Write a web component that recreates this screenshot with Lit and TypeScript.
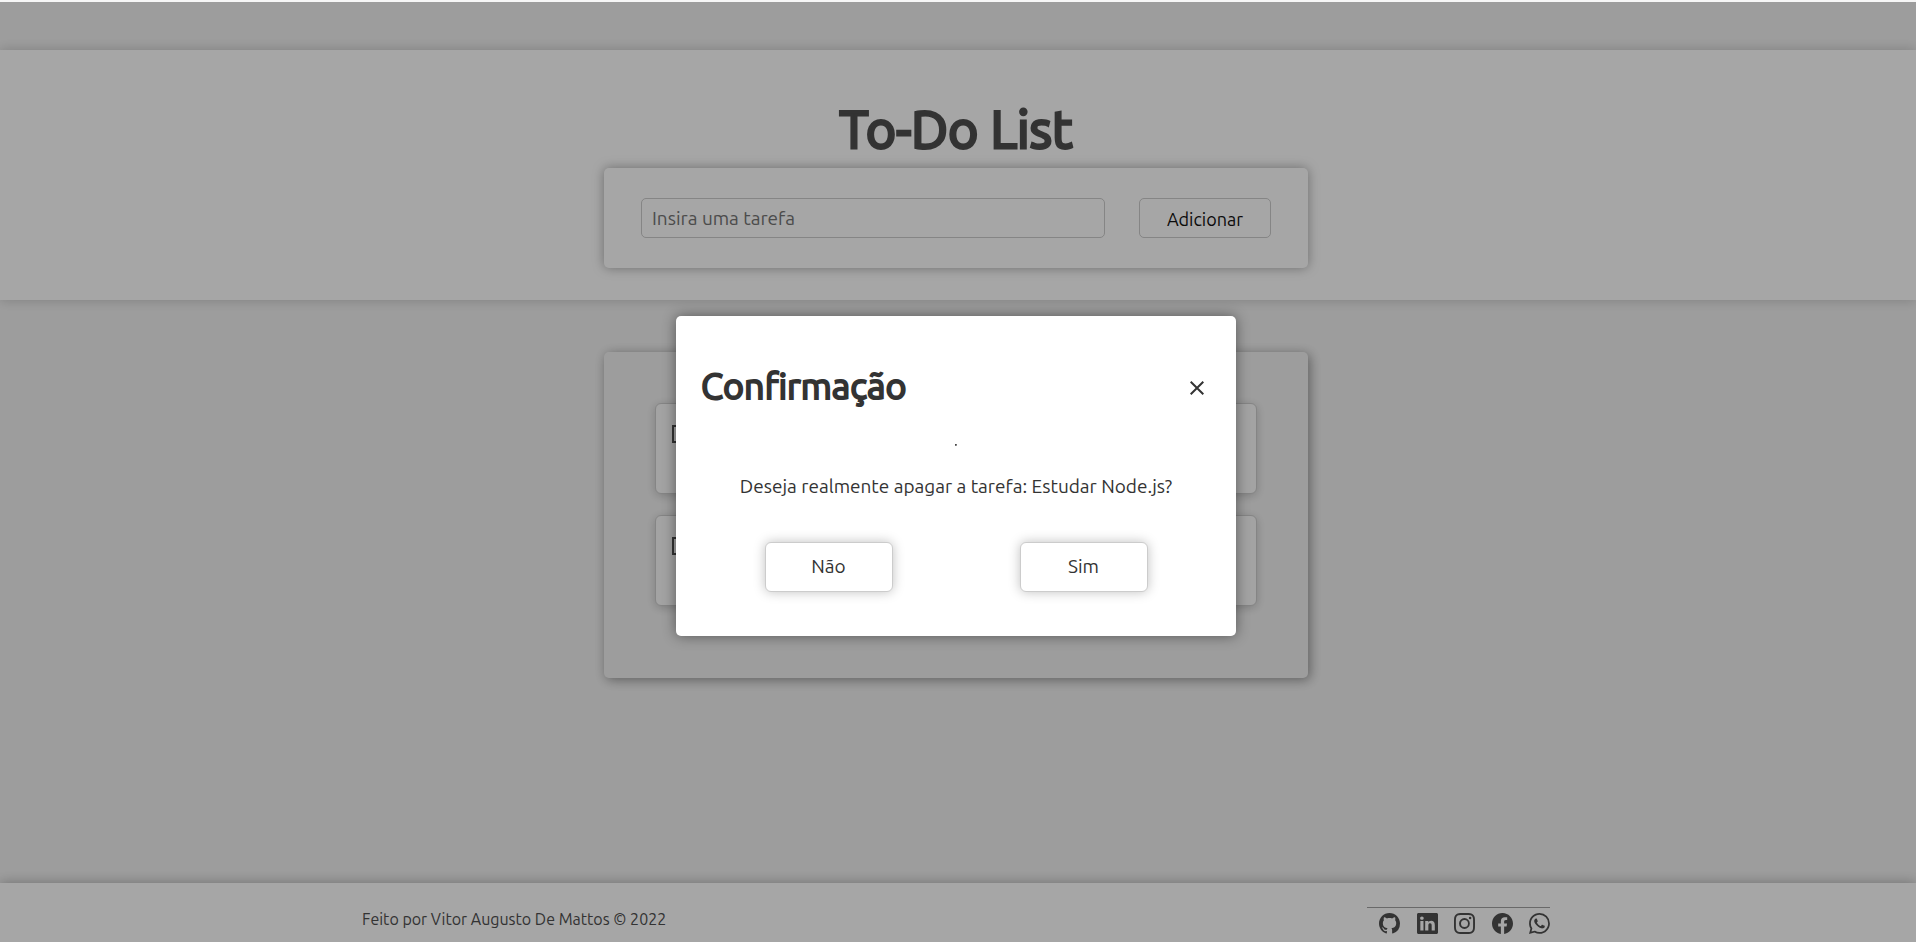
import { LitElement, html, css, svg } from "lit";
import { customElement } from "lit/decorators.js";

const icons = [
  { name: "GitHub", path: "M8 0C3.58 0 0 3.58 0 8c0 3.54 2.29 6.53 5.47 7.59.4.07.55-.17.55-.38 0-.19-.01-.82-.01-1.49-2.01.37-2.53-.49-2.69-.94-.09-.23-.48-.94-.82-1.13-.28-.15-.68-.52-.01-.53.63-.01 1.08.58 1.23.82.72 1.21 1.87.87 2.33.66.07-.52.28-.87.51-1.07-1.78-.2-3.64-.89-3.64-3.95 0-.87.31-1.59.82-2.15-.08-.2-.36-1.02.08-2.12 0 0 .67-.21 2.2.82.64-.18 1.32-.27 2-.27s1.36.09 2 .27c1.53-1.04 2.2-.82 2.2-.82.44 1.1.16 1.92.08 2.12.51.56.82 1.27.82 2.15 0 3.07-1.87 3.75-3.65 3.95.29.25.54.73.54 1.48 0 1.07-.01 1.93-.01 2.2 0 .21.15.46.55.38A8.01 8.01 0 0 0 16 8c0-4.42-3.58-8-8-8" },
  { name: "LinkedIn", path: "M0 1.146C0 .513.526 0 1.175 0h13.65C15.474 0 16 .513 16 1.146v13.708c0 .633-.526 1.146-1.175 1.146H1.175C.526 16 0 15.487 0 14.854zm4.943 12.248V6.169H2.542v7.225zm-1.2-8.212c.837 0 1.358-.554 1.358-1.248-.015-.709-.52-1.248-1.342-1.248S2.4 3.226 2.4 3.934c0 .694.521 1.248 1.327 1.248zm4.908 8.212V9.359c0-.216.016-.432.08-.586.173-.431.568-.878 1.232-.878.869 0 1.216.662 1.216 1.634v3.865h2.401V9.25c0-2.22-1.184-3.252-2.764-3.252-1.274 0-1.845.7-2.165 1.193v.025h-.016l.016-.025V6.169h-2.4c.03.678 0 7.225 0 7.225z" },
  { name: "Instagram", path: "M8 0C5.829 0 5.556.01 4.703.048 3.85.088 3.269.222 2.76.42a3.9 3.9 0 0 0-1.417.923A3.9 3.9 0 0 0 .42 2.76C.222 3.268.087 3.85.048 4.7.01 5.555 0 5.827 0 8.001c0 2.172.01 2.444.048 3.297.04.852.174 1.433.372 1.942.205.526.478.972.923 1.417.444.445.89.719 1.416.923.51.198 1.09.333 1.942.372C5.555 15.99 5.827 16 8 16s2.444-.01 3.298-.048c.851-.04 1.434-.174 1.943-.372a3.9 3.9 0 0 0 1.416-.923c.445-.445.718-.891.923-1.417.197-.509.332-1.09.372-1.942C15.99 10.445 16 10.173 16 8s-.01-2.445-.048-3.299c-.04-.851-.175-1.433-.372-1.941a3.9 3.9 0 0 0-.923-1.417A3.9 3.9 0 0 0 13.24.42c-.51-.198-1.092-.333-1.943-.372C10.443.01 10.172 0 7.998 0zm-.717 1.442h.718c2.136 0 2.389.007 3.232.046.78.035 1.204.166 1.486.275.373.145.64.319.92.599s.453.546.598.92c.11.281.24.705.275 1.485.039.843.047 1.096.047 3.231s-.008 2.389-.047 3.232c-.035.78-.166 1.203-.275 1.485a2.5 2.5 0 0 1-.599.919c-.28.28-.546.453-.92.598-.28.11-.704.24-1.485.276-.843.038-1.096.047-3.232.047s-2.39-.009-3.233-.047c-.78-.036-1.203-.166-1.485-.276a2.5 2.5 0 0 1-.92-.598 2.5 2.5 0 0 1-.6-.92c-.109-.281-.24-.705-.275-1.485-.038-.843-.046-1.096-.046-3.233s.008-2.388.046-3.231c.036-.78.166-1.204.276-1.486.145-.373.319-.64.599-.92s.546-.453.92-.598c.282-.11.705-.24 1.485-.276.738-.034 1.024-.044 2.515-.045zm4.988 1.328a.96.96 0 1 0 0 1.92.96.96 0 0 0 0-1.92m-4.27 1.122a4.109 4.109 0 1 0 0 8.217 4.109 4.109 0 0 0 0-8.217m0 1.441a2.667 2.667 0 1 1 0 5.334 2.667 2.667 0 0 1 0-5.334" },
  { name: "Facebook", path: "M16 8.049c0-4.446-3.582-8.05-8-8.05C3.58 0-.002 3.603-.002 8.05c0 4.017 2.926 7.347 6.75 7.951v-5.625h-2.03V8.05H6.75V6.275c0-2.017 1.195-3.131 3.022-3.131.876 0 1.791.157 1.791.157v1.98h-1.009c-.993 0-1.303.621-1.303 1.258v1.51h2.218l-.354 2.326H9.25V16c3.824-.604 6.75-3.934 6.75-7.951" },
  { name: "WhatsApp", path: "M13.601 2.326A7.85 7.85 0 0 0 7.994 0C3.627 0 .068 3.558.064 7.926c0 1.399.366 2.76 1.057 3.965L0 16l4.204-1.102a7.9 7.9 0 0 0 3.79.965h.004c4.368 0 7.926-3.558 7.93-7.93A7.9 7.9 0 0 0 13.6 2.326zM7.994 14.521a6.6 6.6 0 0 1-3.356-.92l-.24-.144-2.494.654.666-2.433-.156-.251a6.56 6.56 0 0 1-1.007-3.505c0-3.626 2.957-6.584 6.591-6.584a6.56 6.56 0 0 1 4.66 1.931 6.56 6.56 0 0 1 1.928 4.66c-.004 3.639-2.961 6.592-6.592 6.592m3.615-4.934c-.197-.099-1.17-.578-1.353-.646-.182-.065-.315-.099-.445.099-.133.197-.513.646-.627.775-.114.133-.232.148-.43.05-.197-.1-.836-.308-1.592-.985-.59-.525-.985-1.175-1.103-1.372-.114-.198-.011-.304.088-.403.087-.088.197-.232.296-.346.1-.114.133-.198.198-.33.065-.134.034-.248-.015-.347-.05-.099-.445-1.076-.612-1.47-.16-.389-.323-.335-.445-.34-.114-.007-.247-.007-.38-.007a.73.73 0 0 0-.529.247c-.182.198-.691.677-.691 1.654s.71 1.916.81 2.049c.098.133 1.394 2.132 3.383 2.992.47.205.84.326 1.129.418.475.152.904.129 1.246.08.38-.058 1.171-.48 1.338-.943.164-.464.164-.86.114-.943-.049-.084-.182-.133-.38-.232" },
];

@customElement("app-root")
export class AppRoot extends LitElement {
  static styles = css`
    :host {
      display: flex;
      flex-direction: column;
      position: relative;
      min-height: 100vh;
      box-sizing: border-box;
      border-top: 2px solid #f6f6f6;
      background: #f2f2f2;
      color: #4f4f4f;
      font-family: Ubuntu, "Noto Sans", sans-serif;
      font-size: 19px;
      overflow: hidden;
    }
    *, *::before { box-sizing: border-box; }
    h1, h2, p, ul { margin: 0; padding: 0; }
    h1, h2 { font-weight: 400; }
    ul { list-style: none; }
    button, input { font: inherit; color: inherit; }
    button { cursor: pointer; }
    .header {
      display: flex;
      flex-direction: column;
      align-items: center;
      margin-top: 48px;
      padding: 47px 28px 32px 24px;
      background: #fff;
      box-shadow: 0 0 12px rgba(0, 0, 0, 0.2);
    }
    .title {
      padding-bottom: 7px;
      font-size: 52px;
      line-height: 64px;
      -webkit-text-stroke: 3px currentColor;
    }
    .form {
      display: flex;
      gap: 34px;
      width: 100%;
      max-width: 704px;
      padding: 30px 37px;
      border-radius: 5px;
      box-shadow: 0 0 12px rgba(0, 0, 0, 0.35);
    }
    .field {
      flex: 1;
      min-width: 0;
      height: 40px;
      padding: 0 10px;
      border: 1px solid #ccc;
      border-radius: 5px;
      background: #fff;
    }
    .field::placeholder { color: #757575; }
    .add {
      width: 132px;
      height: 40px;
      padding: 2px 0 0;
      border: 1px solid #ccc;
      border-radius: 5px;
      background: #fff;
      color: #111;
      font-size: 18px;
    }
    .main {
      display: flex;
      justify-content: center;
      padding: 52px 28px 52px 24px;
    }
    .list {
      display: flex;
      flex-direction: column;
      gap: 21px;
      width: 100%;
      max-width: 704px;
      padding: 51px 51px 72px;
      border-radius: 5px;
      box-shadow: 2px 2px 12px rgba(0, 0, 0, 0.4);
    }
    .task {
      display: flex;
      align-items: flex-start;
      height: 91px;
      padding: 21px 16px;
      background: #fafafa;
      border: 1px solid #ccc;
      border-radius: 6px;
      box-shadow: 0 2px 10px rgba(0, 0, 0, 0.2);
    }
    .check {
      appearance: none;
      width: 18px;
      height: 18px;
      margin: 0;
      border: 2px solid #4f4f4f;
    }
    .footer {
      display: flex;
      justify-content: space-between;
      margin-top: auto;
      padding: 24px 366px 7px 362px;
      background: #fff;
      box-shadow: 0 0 12px rgba(0, 0, 0, 0.3);
    }
    .credit { font-size: 16px; line-height: 24px; }
    .social {
      display: flex;
      justify-content: space-between;
      width: 183px;
      padding: 5px 0 1px 12px;
      border-top: 1px solid #a2a2a2;
    }
    .social a { display: block; height: 21px; color: inherit; }
    .icon { display: block; width: 21px; height: 21px; fill: currentColor; }
    .overlay {
      position: absolute;
      inset: 0;
      display: flex;
      justify-content: center;
      align-items: flex-start;
      padding: 314px 4px 0 0;
      background: rgba(0, 0, 0, 0.35);
      color: #333;
    }
    .modal {
      display: flex;
      flex-direction: column;
      width: 560px;
      padding: 42px 25px 44px;
      background: #fff;
      border-radius: 5px;
      box-shadow: 0 0 14px rgba(0, 0, 0, 0.45);
    }
    .top { display: flex; justify-content: space-between; align-items: flex-end; }
    .heading {
      font-size: 36px;
      line-height: 56px;
      -webkit-text-stroke: 2px currentColor;
    }
    .close { margin-bottom: 12px; padding: 7px; border: 0; background: none; }
    .cross { display: block; width: 14px; height: 14px; stroke: currentColor; stroke-width: 2; }
    .rule { width: 2px; margin: 30px auto 0; border: 1px inset #999; }
    .question { margin-top: 24px; line-height: 32px; text-align: center; }
    .choices { display: flex; justify-content: space-around; margin-top: 40px; }
    .choice {
      width: 128px;
      height: 50px;
      padding: 0 0 2px;
      border: 1px solid #ccc;
      border-radius: 6px;
      background: #fff;
      box-shadow: 0 0 12px rgba(0, 0, 0, 0.25);
    }
  `;

  render() {
    return html`
      <header class="header">
        <h1 class="title">To-Do List</h1>
        <form class="form" @submit=${(e: Event) => e.preventDefault()}>
          <input class="field" type="text" placeholder="Insira uma tarefa" aria-label="Insira uma tarefa" />
          <button class="add">Adicionar</button>
        </form>
      </header>
      <main class="main">
        <ul class="list">
          ${[1, 2].map(() => html`<li class="task"><input class="check" type="checkbox" aria-label="Tarefa" /></li>`)}
        </ul>
      </main>
      <footer class="footer">
        <p class="credit">Feito por Vitor Augusto De Mattos © 2022</p>
        <nav class="social">
          ${icons.map((i) => html`<a href="#" aria-label=${i.name}><svg class="icon" viewBox="0 0 16 16">${svg`<path d=${i.path} />`}</svg></a>`)}
        </nav>
      </footer>
      <div class="overlay">
        <section class="modal" role="dialog" aria-labelledby="heading">
          <div class="top">
            <h2 class="heading" id="heading">Confirmação</h2>
            <button class="close" aria-label="Fechar">
              <svg class="cross" viewBox="0 0 14 14"><path d="M.7.7l12.6 12.6M13.3.7L.7 13.3" /></svg>
            </button>
          </div>
          <hr class="rule" />
          <p class="question">Deseja realmente apagar a tarefa: Estudar Node.js?</p>
          <div class="choices">
            <button class="choice">Não</button>
            <button class="choice">Sim</button>
          </div>
        </section>
      </div>
    `;
  }
}
